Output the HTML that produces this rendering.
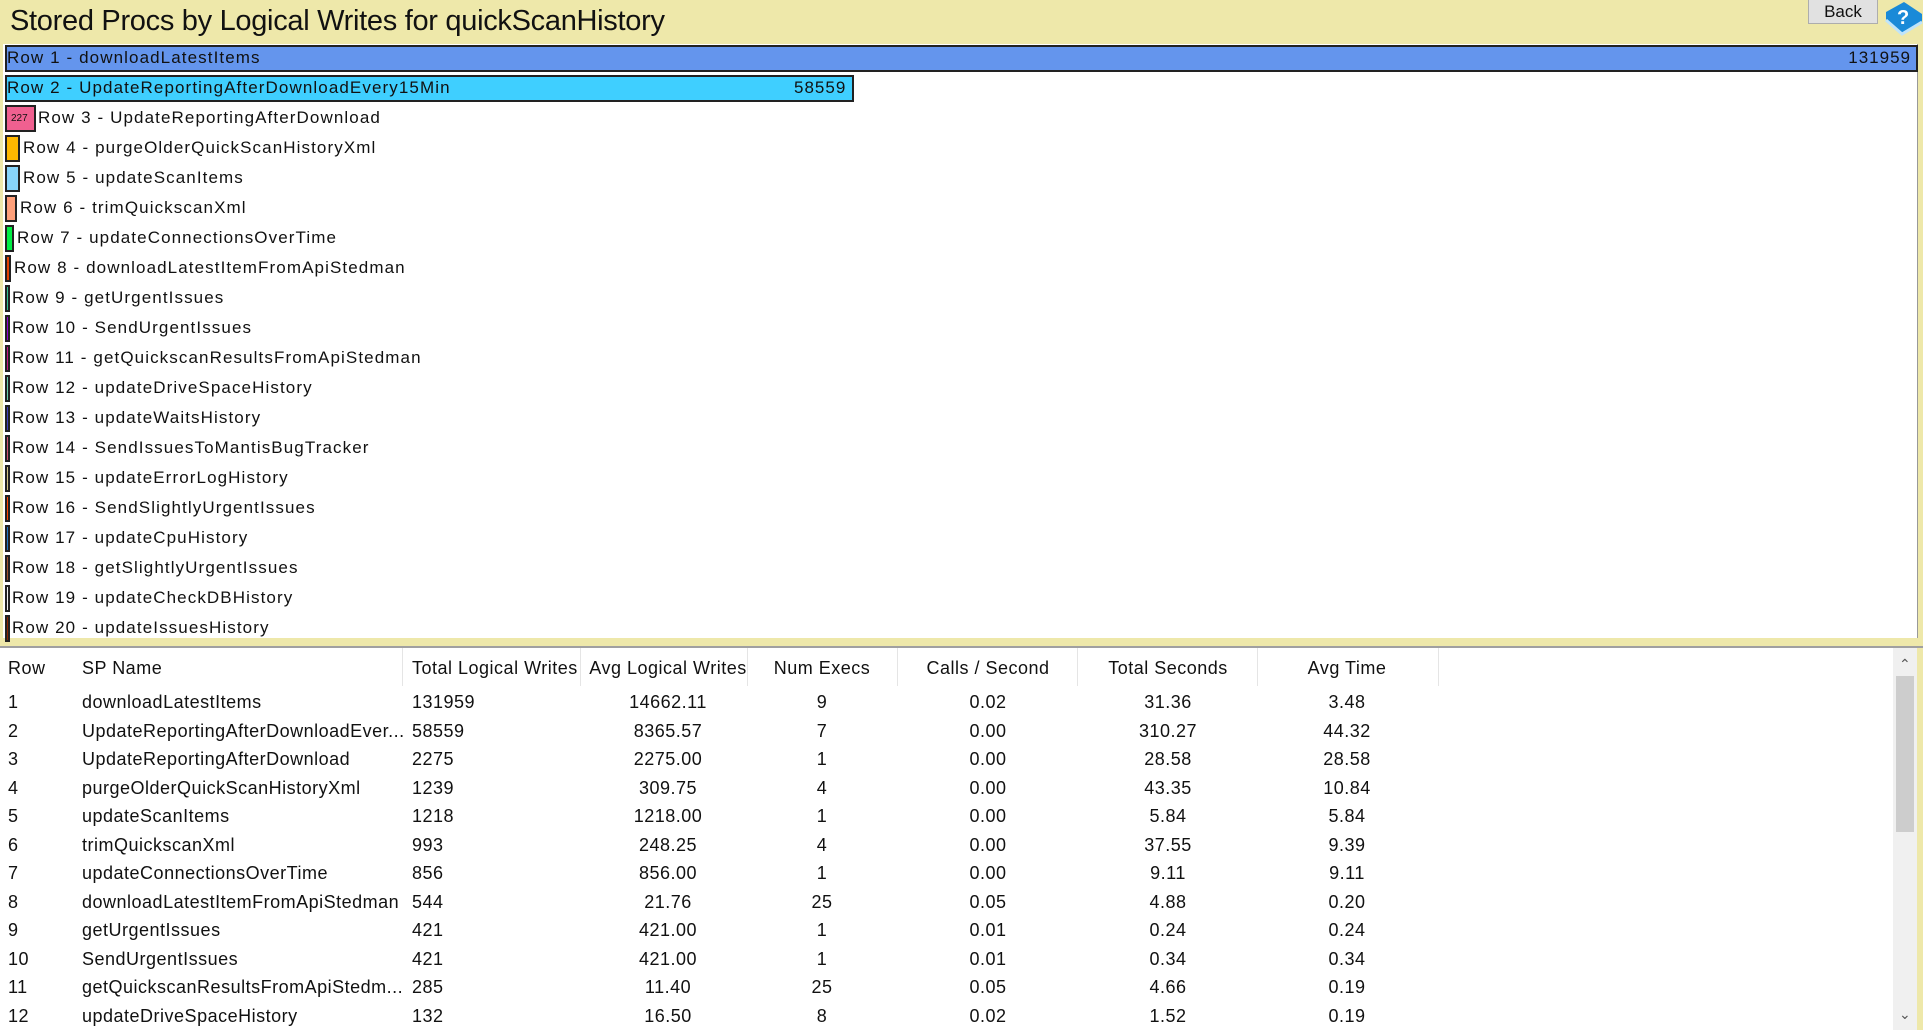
<!DOCTYPE html>
<html><head><meta charset="utf-8"><style>
body{margin:0;width:1923px;height:1030px;overflow:hidden;background:#EEE8AA;font-family:"Liberation Sans",sans-serif;position:relative;color:#111}
.title{position:absolute;left:10px;top:5px;font-size:29px;letter-spacing:-0.3px}
.back{position:absolute;left:1808px;top:-2px;width:70px;height:26px;background:#e1e1e1;border:1px solid #adadad;font-size:17px;text-align:center;line-height:26px;box-sizing:border-box}
.chart{position:absolute;left:3px;top:44px;width:1914px;height:594px;background:#fff;border-right:1px solid #999}
.bar{position:absolute;left:2px;height:27px;border:2px solid #222;box-sizing:border-box}
.lbl{position:absolute;font-size:17px;line-height:26px;white-space:nowrap;letter-spacing:1.1px}
.val{position:absolute;font-size:17px;line-height:26px;letter-spacing:1px}
.tbl{position:absolute;left:0;top:648px;width:1917px;height:382px;background:#fff}
.c{position:absolute;font-size:18px;white-space:nowrap;letter-spacing:0.5px}
.hd{position:absolute;top:0;width:1px;height:38px;background:#e5e5e5}
.sb{position:absolute;left:1893px;top:648px;width:24px;height:382px;background:#f0f0f0}
</style></head><body>
<div class="title">Stored Procs by Logical Writes for quickScanHistory</div>
<div class="back">Back</div>
<svg style="position:absolute;left:1882px;top:0" width="41" height="36" viewBox="0 0 41 36">
<path d="M4 12 L22 2 L40 14 L40 22 L20 34 L4 20 Z" fill="#1a8ad8"/>
<path d="M4 20 L20 34 L40 22" stroke="#bfe4fa" stroke-width="3" fill="none"/>
<text x="15" y="24" font-size="20" font-weight="bold" fill="#fff" font-family="Liberation Sans">?</text>
</svg>
<div class="chart">
<div class="bar" style="top:1px;width:1913px;background:#6495ED"></div>
<div class="lbl" style="left:4px;top:1px">Row 1 - downloadLatestItems</div>
<div class="val" style="right:6px;top:1px">131959</div>
<div class="bar" style="top:31px;width:849px;background:#3FCFFF"></div>
<div class="lbl" style="left:4px;top:31px">Row 2 - UpdateReportingAfterDownloadEvery15Min</div>
<div class="val" style="left:791px;top:31px">58559</div>
<div class="bar" style="top:61px;width:31px;background:#F06090"></div>
<div style="position:absolute;left:8px;top:61px;font-size:10px;line-height:27px">227</div>
<div class="lbl" style="left:35px;top:61px">Row 3 - UpdateReportingAfterDownload</div>
<div class="bar" style="top:91px;width:15px;background:#FFB800"></div>
<div class="lbl" style="left:20px;top:91px">Row 4 - purgeOlderQuickScanHistoryXml</div>
<div class="bar" style="top:121px;width:15px;background:#87D4FA"></div>
<div class="lbl" style="left:20px;top:121px">Row 5 - updateScanItems</div>
<div class="bar" style="top:151px;width:12px;background:#FFA07A"></div>
<div class="lbl" style="left:17px;top:151px">Row 6 - trimQuickscanXml</div>
<div class="bar" style="top:181px;width:9px;background:#00EE44"></div>
<div class="lbl" style="left:14px;top:181px">Row 7 - updateConnectionsOverTime</div>
<div class="bar" style="top:211px;width:6px;background:#E04000"></div>
<div class="lbl" style="left:11px;top:211px">Row 8 - downloadLatestItemFromApiStedman</div>
<div class="bar" style="top:241px;width:5px;background:#30C090"></div>
<div class="lbl" style="left:9px;top:241px">Row 9 - getUrgentIssues</div>
<div class="bar" style="top:271px;width:5px;background:#9400D3"></div>
<div class="lbl" style="left:9px;top:271px">Row 10 - SendUrgentIssues</div>
<div class="bar" style="top:301px;width:5px;background:#C71585"></div>
<div class="lbl" style="left:9px;top:301px">Row 11 - getQuickscanResultsFromApiStedman</div>
<div class="bar" style="top:331px;width:5px;background:#66CDAA"></div>
<div class="lbl" style="left:9px;top:331px">Row 12 - updateDriveSpaceHistory</div>
<div class="bar" style="top:361px;width:5px;background:#4040C0"></div>
<div class="lbl" style="left:9px;top:361px">Row 13 - updateWaitsHistory</div>
<div class="bar" style="top:391px;width:5px;background:#D05070"></div>
<div class="lbl" style="left:9px;top:391px">Row 14 - SendIssuesToMantisBugTracker</div>
<div class="bar" style="top:421px;width:5px;background:#D0C080"></div>
<div class="lbl" style="left:9px;top:421px">Row 15 - updateErrorLogHistory</div>
<div class="bar" style="top:451px;width:5px;background:#FF4500"></div>
<div class="lbl" style="left:9px;top:451px">Row 16 - SendSlightlyUrgentIssues</div>
<div class="bar" style="top:481px;width:5px;background:#1E78C8"></div>
<div class="lbl" style="left:9px;top:481px">Row 17 - updateCpuHistory</div>
<div class="bar" style="top:511px;width:5px;background:#A0522D"></div>
<div class="lbl" style="left:9px;top:511px">Row 18 - getSlightlyUrgentIssues</div>
<div class="bar" style="top:541px;width:5px;background:#eee"></div>
<div class="lbl" style="left:9px;top:541px">Row 19 - updateCheckDBHistory</div>
<div class="bar" style="top:571px;width:5px;background:#8B2500"></div>
<div class="lbl" style="left:9px;top:571px">Row 20 - updateIssuesHistory</div>
</div>
<div style="position:absolute;left:0;top:646px;width:1923px;height:2px;background:#a0a0a0"></div>
<div class="tbl">
<div class="hd" style="left:402px"></div><div class="hd" style="left:580px"></div><div class="hd" style="left:747px"></div><div class="hd" style="left:897px"></div><div class="hd" style="left:1077px"></div><div class="hd" style="left:1257px"></div><div class="hd" style="left:1438px"></div>
<div id="t"></div>
</div>
<div class="sb">
<div style="position:absolute;left:6px;top:8px;font-size:14px;color:#555">&#8963;</div>
<div style="position:absolute;left:3px;top:28px;width:18px;height:156px;background:#cdcdcd"></div>
<div style="position:absolute;left:6px;top:358px;font-size:14px;color:#555">&#8964;</div>
</div>
<div class="tbl" style="background:transparent;width:1890px">
<div class="c" style="left:8px;top:10px">Row</div><div class="c" style="left:82px;top:10px">SP Name</div><div class="c" style="left:412px;top:10px">Total Logical Writes</div>
<div class="c" style="left:668px;top:10px;transform:translateX(-50%)">Avg Logical Writes</div>
<div class="c" style="left:822px;top:10px;transform:translateX(-50%)">Num Execs</div>
<div class="c" style="left:988px;top:10px;transform:translateX(-50%)">Calls / Second</div>
<div class="c" style="left:1168px;top:10px;transform:translateX(-50%)">Total Seconds</div>
<div class="c" style="left:1347px;top:10px;transform:translateX(-50%)">Avg Time</div>
</div>
<script>
var d=[["1","downloadLatestItems","131959","14662.11","9","0.02","31.36","3.48"],
["2","UpdateReportingAfterDownloadEver...","58559","8365.57","7","0.00","310.27","44.32"],
["3","UpdateReportingAfterDownload","2275","2275.00","1","0.00","28.58","28.58"],
["4","purgeOlderQuickScanHistoryXml","1239","309.75","4","0.00","43.35","10.84"],
["5","updateScanItems","1218","1218.00","1","0.00","5.84","5.84"],
["6","trimQuickscanXml","993","248.25","4","0.00","37.55","9.39"],
["7","updateConnectionsOverTime","856","856.00","1","0.00","9.11","9.11"],
["8","downloadLatestItemFromApiStedman","544","21.76","25","0.05","4.88","0.20"],
["9","getUrgentIssues","421","421.00","1","0.01","0.24","0.24"],
["10","SendUrgentIssues","421","421.00","1","0.01","0.34","0.34"],
["11","getQuickscanResultsFromApiStedm...","285","11.40","25","0.05","4.66","0.19"],
["12","updateDriveSpaceHistory","132","16.50","8","0.02","1.52","0.19"]];
var h="",L=[8,82,412],C=[668,822,988,1168,1347];
d.forEach(function(r,i){var y=44+i*28.5;
for(var j=0;j<3;j++)h+='<div class="c" style="left:'+L[j]+'px;top:'+y+'px">'+r[j]+'</div>';
for(var j=0;j<5;j++)h+='<div class="c" style="left:'+C[j]+'px;top:'+y+'px;transform:translateX(-50%)">'+r[j+3]+'</div>';});
document.getElementById("t").innerHTML=h;
</script>
</body></html>
